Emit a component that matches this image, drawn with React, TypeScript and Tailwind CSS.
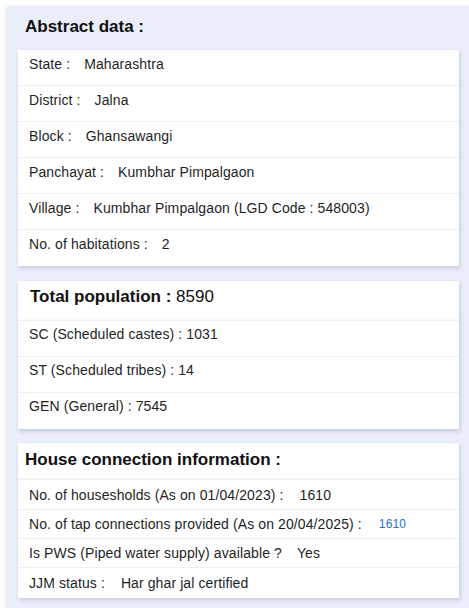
import React from "react";

const abstractRows: [string, string][] = [
  ["State :", "Maharashtra"],
  ["District :", "Jalna"],
  ["Block :", "Ghansawangi"],
  ["Panchayat :", "Kumbhar Pimpalgaon"],
  ["Village :", "Kumbhar Pimpalgaon (LGD Code : 548003)"],
  ["No. of habitations :", "2"],
];

const populationRows = [
  "SC (Scheduled castes) : 1031",
  "ST (Scheduled tribes) : 14",
  "GEN (General) : 7545",
];

export default function App() {
  return (
    <div
      className="w-[469px] h-[608px] overflow-hidden bg-white pt-[6px] pl-[6px] text-[#1f1f1f] tracking-[0.1px]"
      style={{ fontFamily: '"Liberation Sans", Arial, sans-serif' }}
    >
      <div className="w-[475px] min-h-[620px] bg-[#e9eef9] rounded-tl-[5px] shadow-[-1px_0_3px_rgba(0,0,0,0.08)] pl-[12px]">
        {/* abstract data */}
        <h2 className="h-[44px] pt-[12px] pl-[7px] text-[17px] leading-[18px] font-bold text-[#111] tracking-normal">
          Abstract data :
        </h2>
        <div className="w-[441px] bg-white shadow-[1px_2px_4px_rgba(60,70,110,0.22)]">
          {abstractRows.map(([label, value], i) => (
            <div
              key={label}
              className={`h-[36px] pt-[6px] pl-[11px] text-[14px] leading-[16px] ${
                i < abstractRows.length - 1 ? "border-b border-[#f0f0f0]" : ""
              }`}
            >
              {label}
              <span className="ml-[14px]">{value}</span>
            </div>
          ))}
        </div>

        {/* population */}
        <div className="mt-[15px] w-[441px] bg-white shadow-[1px_2px_4px_rgba(60,70,110,0.22)]">
          <div className="h-[39px] pt-[7px] pl-[12px] text-[17px] leading-[18px] text-[#111] tracking-normal">
            <span className="font-bold">Total population : </span>
            <span>8590</span>
          </div>
          <div className="border-t border-[#f0f0f0] shadow-[0_-1px_2px_rgba(0,0,0,0.03)]">
            {populationRows.map((row, i) => (
              <div
                key={row}
                className={`h-[36px] pt-[5px] pl-[11px] text-[14px] leading-[16px] ${
                  i < populationRows.length - 1 ? "border-b border-[#f0f0f0]" : ""
                }`}
              >
                {row}
              </div>
            ))}
          </div>
        </div>

        {/* house connection */}
        <div className="mt-[14px] w-[441px] bg-white shadow-[1px_2px_4px_rgba(60,70,110,0.22)]">
          <h2 className="h-[36px] pt-[8px] pl-[7px] text-[17px] leading-[18px] font-bold text-[#111] tracking-normal">
            House connection information :
          </h2>
          <div className="border-t border-[#f0f0f0] shadow-[0_-1px_2px_rgba(0,0,0,0.03)] text-[14px] leading-[16px]">
            <div className="h-[30px] flex items-center pl-[11px] border-b border-[#f0f0f0]">
              No. of housesholds (As on 01/04/2023) :
              <span className="ml-[16px]">1610</span>
            </div>
            <div className="h-[29px] flex items-center pl-[11px] border-b border-[#f0f0f0]">
              No. of tap connections provided (As on 20/04/2025) :
              <span className="ml-[17px] text-[12px] text-[#1a73d9]">1610</span>
            </div>
            <div className="h-[29px] flex items-center pl-[11px] border-b border-[#f0f0f0]">
              Is PWS (Piped water supply) available ?
              <span className="ml-[15px]">Yes</span>
            </div>
            <div className="h-[30px] flex items-center pl-[11px]">
              JJM status :
              <span className="ml-[16px]">Har ghar jal certified</span>
            </div>
          </div>
        </div>
      </div>
    </div>
  );
}
